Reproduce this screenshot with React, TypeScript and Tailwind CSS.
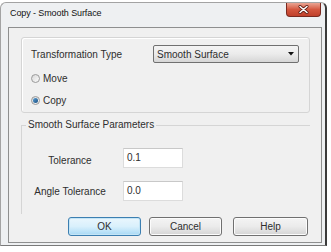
import React from "react";

function Radio({ checked }: { checked?: boolean }) {
  return (
    <span className="w-[9px] h-[9px] rounded-full border border-[#9a9a9a] bg-gradient-to-br from-[#d9d9d9] to-[#fbfbfb] flex items-center justify-center shrink-0">
      {checked && <span className="w-[5px] h-[5px] rounded-full bg-gradient-to-br from-[#5aa0d6] to-[#1c4f80]" />}
    </span>
  );
}

function Btn({ label, primary, w }: { label: string; primary?: boolean; w: string }) {
  return (
    <div
      className={
        "h-[19px] rounded-[3px] border flex items-center justify-center text-[10px] text-[#2e2e2e] " +
        w +
        " " +
        (primary
          ? "border-[#3c7fb1] bg-gradient-to-b from-[#eaf6fd] via-[#d9f0fc] to-[#a7d9f5] shadow-[inset_0_0_0_1px_#c4e5f6]"
          : "border-[#707070] bg-gradient-to-b from-[#f4f4f4] via-[#ebebeb] to-[#d4d4d4] shadow-[inset_0_0_0_1px_#fcfcfc]")
      }
    >
      {label}
    </div>
  );
}

export default function App() {
  return (
    <div className="w-[331px] h-[252px] bg-white" style={{ fontFamily: '"Liberation Sans", Arial, sans-serif' }}>
      <div className="mt-[2px] w-[327px] h-[244px] rounded-t-[6px] border-l border-t border-[#a3a3a3] border-r-2 border-r-[#3b3b3b] border-b border-b-[#7a7a7a] bg-[#eef0f2] relative flex flex-col">
        {/* title bar */}
        <div className="h-[24px] flex items-center pl-[9px] pb-[2px] text-[9px] tracking-[-0.1px] text-[#111]">
          Copy - Smooth Surface
        </div>
        <div className="absolute top-0 right-[4px] w-[35px] h-[14px] rounded-b-[4px] border border-[#7a2a20] border-t-0 bg-gradient-to-b from-[#e9a493] via-[#d4573f] to-[#c0402b] flex items-center justify-center">
          <svg width="11" height="9" viewBox="0 0 11 9">
            <path d="M2 1.5 L9 7.5 M9 1.5 L2 7.5" stroke="#5a1a12" strokeWidth="3" strokeLinecap="round" />
            <path d="M2 1.5 L9 7.5 M9 1.5 L2 7.5" stroke="#ffffff" strokeWidth="1.6" strokeLinecap="round" />
          </svg>
        </div>

        {/* client */}
        <div className="ml-[7px] w-[314px] h-[216px] border border-[#8e8f8f] bg-[#f0f0f0] flex flex-col text-[10px] text-[#2e2e2e]">
          {/* group 1 */}
          <div className="ml-[12px] mt-[9px] w-[289px] h-[76px] border border-[#d5d5d5] rounded-[3px] shadow-[inset_1px_1px_0_#ffffff] pl-[9px] pt-[7px] flex flex-col">
            <div className="h-[18px] flex items-center">
              <span className="w-[122px]">Transformation Type</span>
              <div className="w-[146px] h-[18px] rounded-[2px] border border-[#707070] bg-gradient-to-b from-[#f4f4f4] via-[#ebebeb] to-[#d6d6d6] flex items-center pl-[3px] pr-[4px]">
                <span className="flex-1">Smooth Surface</span>
                <svg width="6" height="4" viewBox="0 0 6 4">
                  <path d="M0 0 L6 0 L3 3.5 Z" fill="#111" />
                </svg>
              </div>
            </div>
            <div className="mt-[8px] h-[14px] flex items-center">
              <Radio />
              <span className="ml-[3px]">Move</span>
            </div>
            <div className="mt-[8px] h-[14px] flex items-center">
              <Radio checked />
              <span className="ml-[3px]">Copy</span>
            </div>
          </div>

          {/* group 2 */}
          <div className="ml-[12px] mt-[12px] w-[289px] h-[89px] border-l border-t border-[#d5d5d5] relative flex flex-col">
            <span className="absolute left-[4px] -top-[7px] bg-[#f0f0f0] px-[2px] leading-[12px]">
              Smooth Surface Parameters
            </span>
            <div className="mt-[22px] pl-[10px] flex items-start">
              <span className="w-[76px] text-center leading-[12px] mt-[7px]">Tolerance</span>
              <div className="ml-[15px] w-[60px] h-[20px] bg-white border border-[#dcdcdc] border-t-[#c8c8c8] pl-[3px] pt-[3px] leading-[12px]">
                0.1
              </div>
            </div>
            <div className="mt-[13px] pl-[10px] flex items-start">
              <span className="w-[76px] text-center leading-[12px] mt-[5px]">Angle Tolerance</span>
              <div className="ml-[15px] w-[60px] h-[20px] bg-white border border-[#dcdcdc] border-t-[#c8c8c8] pl-[3px] pt-[3px] leading-[12px]">
                0.0
              </div>
            </div>
          </div>

          {/* buttons */}
          <div className="mt-[3px] ml-[59px] flex">
            <Btn label="OK" primary w="w-[73px]" />
            <div className="ml-[8px]">
              <Btn label="Cancel" w="w-[73px]" />
            </div>
            <div className="ml-[11px]">
              <Btn label="Help" w="w-[75px]" />
            </div>
          </div>
        </div>
      </div>
    </div>
  );
}
